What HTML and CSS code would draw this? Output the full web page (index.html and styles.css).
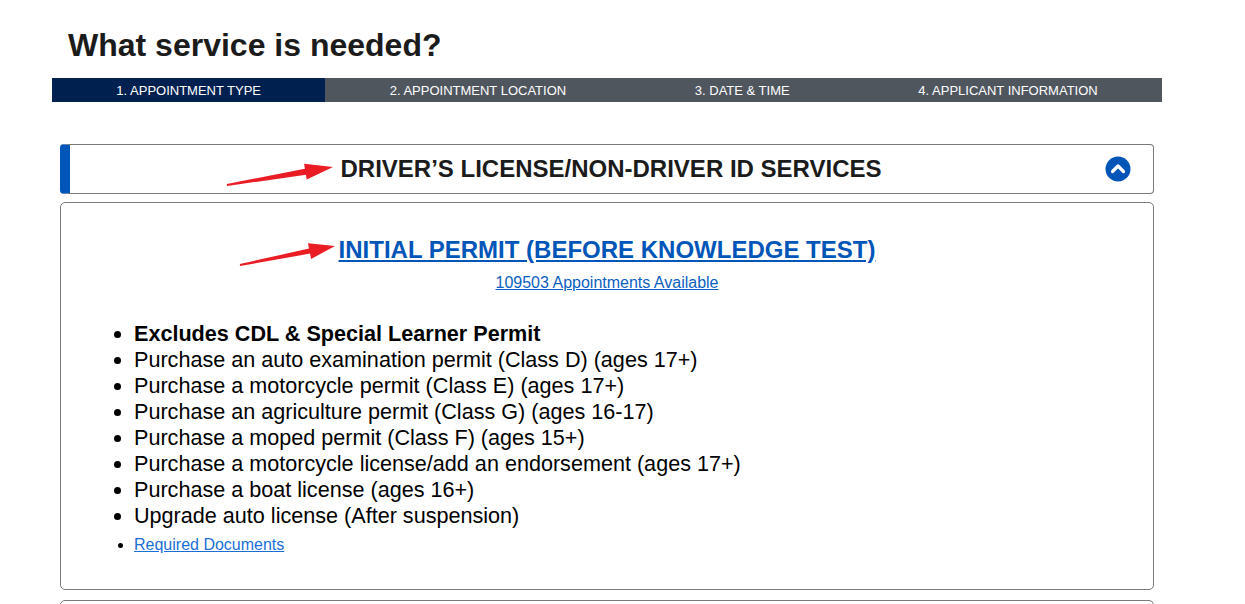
FILE: index.html
```html
<!DOCTYPE html>
<html lang="en">

<head>
    <meta charset="UTF-8">
    <meta name="viewport" content="width=device-width, initial-scale=1.0">
    <title>What service is needed?</title>
    <link rel="stylesheet" href="styles.css">
</head>

<body>

    <div class="page">
        <h1 class="page-title">What service is needed?</h1>

        <!-- Pasos -->
        <div class="steps">
            <div class="step active">1. APPOINTMENT TYPE</div>
            <div class="step">2. APPOINTMENT LOCATION</div>
            <div class="step">3. DATE &amp; TIME</div>
            <div class="step">4. APPLICANT INFORMATION</div>
        </div>

        <!-- Acordeon -->
        <div class="accordion">
            <div class="acc-header">
                <h2>DRIVER’S LICENSE/NON-DRIVER ID SERVICES</h2>
                <svg class="acc-toggle" width="26" height="26" viewBox="0 0 26 26">
                    <circle cx="13" cy="13" r="12.5" fill="#0055b8" />
                    <polyline points="7.5,15.5 13,10 18.5,15.5" fill="none" stroke="#fff" stroke-width="3.2"
                        stroke-linecap="round" stroke-linejoin="round" />
                </svg>
            </div>

            <div class="acc-body">
                <a href="#" class="service-title">INITIAL PERMIT (BEFORE KNOWLEDGE TEST)</a>
                <a href="#" class="service-count">109503 Appointments Available</a>

                <ul class="service-list">
                    <li><strong>Excludes CDL &amp; Special Learner Permit</strong></li>
                    <li>Purchase an auto examination permit (Class D) (ages 17+)</li>
                    <li>Purchase a motorcycle permit (Class E) (ages 17+)</li>
                    <li>Purchase an agriculture permit (Class G) (ages 16-17)</li>
                    <li>Purchase a moped permit (Class F) (ages 15+)</li>
                    <li>Purchase a motorcycle license/add an endorsement (ages 17+)</li>
                    <li>Purchase a boat license (ages 16+)</li>
                    <li>Upgrade auto license (After suspension)</li>
                    <li class="docs"><a href="#">Required Documents</a></li>
                </ul>
            </div>

            <div class="acc-next"></div>
        </div>
    </div>

    <!-- Flechas rojas de anotacion -->
    <svg class="annotations" width="1245" height="604" viewBox="0 0 1245 604">
        <polygon fill="#ea1c24"
            points="227.2,186 305.9,174.7 306.7,179.6 333,167 304.1,163.8 304.9,168.7 226.8,184" />
        <polygon fill="#ea1c24"
            points="240.2,266 310,253.6 311.1,258.9 335,246 307.9,243.3 309,248.6 239.8,264" />
    </svg>

</body>

</html>
```

FILE: styles.css
```css
/* Reset */
* {
    margin: 0;
    padding: 0;
    box-sizing: border-box;
}

body {
    background-color: #fff;
    font-family: "Liberation Sans", Arial, sans-serif;
    color: #1b1b1b;
    overflow: hidden;
}

.page {
    width: 1162px;
    padding-left: 52px;
}

.page-title {
    padding: 25px 0 0 16px;
    font-size: 32px;
    line-height: 40px;
    font-weight: bold;
    color: #1b1b1b;
}

/* Barra de pasos */
.steps {
    margin-top: 13px;
    display: flex;
    background-color: #4f565e;
    height: 24px;
}

.step {
    flex: 1 1 auto;
    color: #fff;
    font-size: 13px;
    line-height: 23px;
    padding-top: 1px;
    text-align: center;
    white-space: nowrap;
}

.step.active {
    background-color: #002050;
}

/* Acordeon */
.accordion {
    margin: 42px 0 0 8px;
    width: 1094px;
}

.acc-header {
    position: relative;
    height: 50px;
    border: 1px solid #7a7a7a;
    border-left: 10px solid #0055b8;
    border-radius: 4px;
    display: flex;
    align-items: center;
    justify-content: center;
}

.acc-header h2 {
    font-size: 24px;
    font-weight: bold;
    color: #1b1b1b;
    margin-left: -1px;
}

.acc-toggle {
    position: absolute;
    right: 22px;
    top: 11px;
}

.acc-body {
    margin-top: 8px;
    border: 1px solid #7a7a7a;
    border-radius: 5px;
    height: 388px;
    padding: 33px 0 0 0;
}

.service-title {
    display: block;
    text-align: center;
    font-size: 24px;
    line-height: 28px;
    font-weight: bold;
    color: #0055b8;
    text-decoration: underline;
}

.service-count {
    display: block;
    width: max-content;
    margin: 9px auto 0;
    font-size: 16px;
    line-height: 20px;
    color: #0b5fbf;
}

.service-list {
    margin-top: 28px;
    padding-left: 73px;
    font-size: 21.6px;
    line-height: 26px;
    color: #000;
}

.service-list strong {
    font-weight: bold;
}

.service-list .docs {
    font-size: 16px;
    line-height: 30px;
    padding-top: 1px;
}

.service-list .docs a {
    color: #1a6fd6;
}

.acc-next {
    margin-top: 10px;
    height: 40px;
    border: 1px solid #7a7a7a;
    border-radius: 5px;
}

/* Flechas */
.annotations {
    position: absolute;
    top: 0;
    left: 0;
    pointer-events: none;
}
```
